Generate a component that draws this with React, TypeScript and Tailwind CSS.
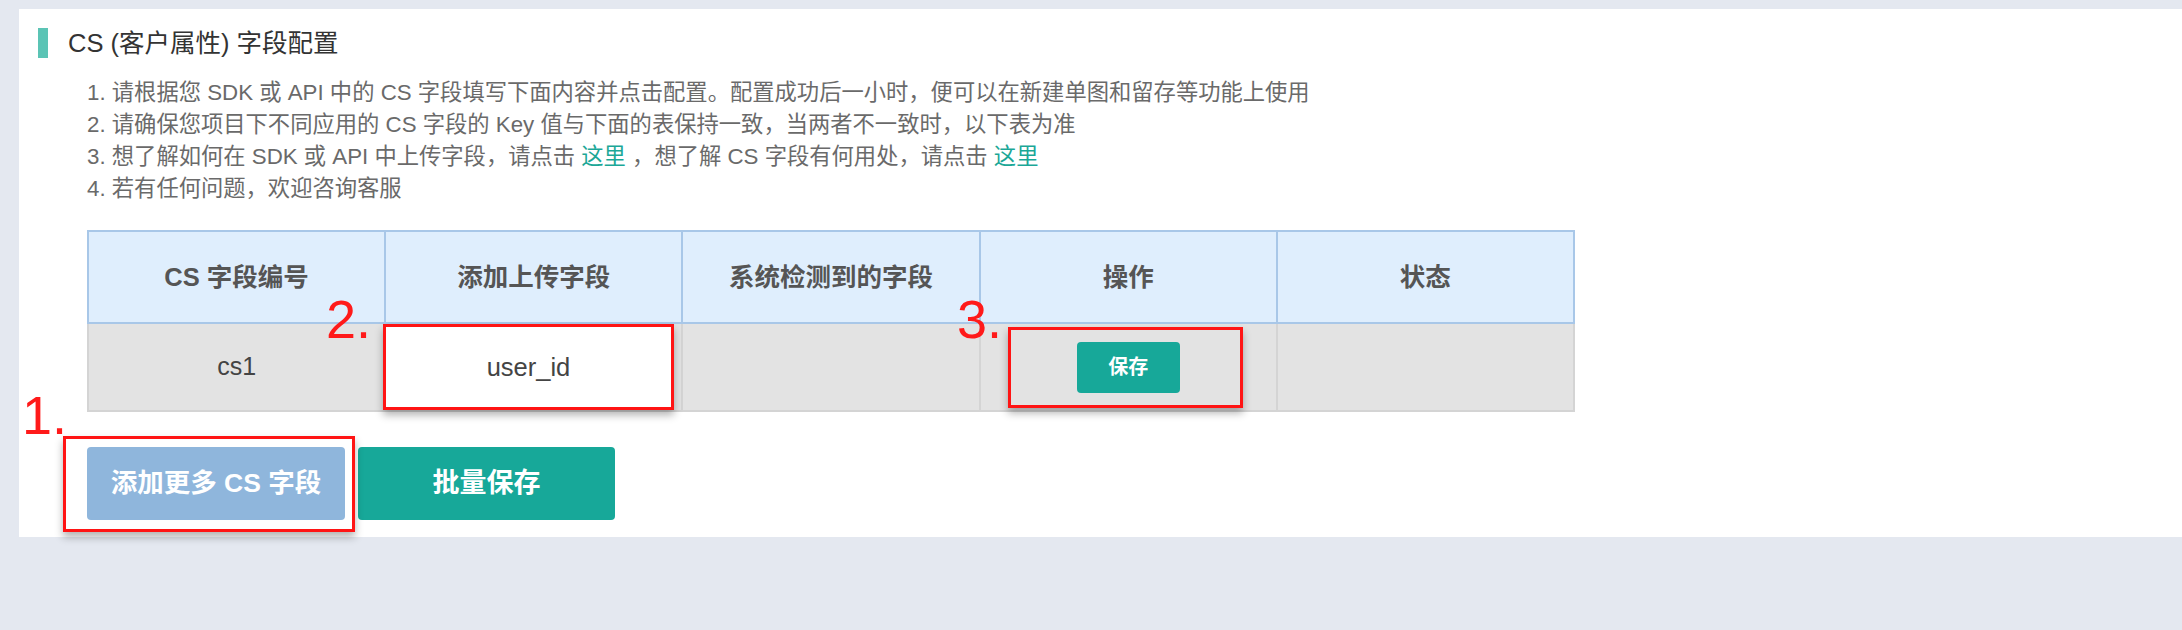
import React from "react";

const FONT = { fontFamily: '"Liberation Sans", "Noto Sans CJK SC", sans-serif' };

const TIPS: React.ReactNode[] = [
  "1. 请根据您 SDK 或 API 中的 CS 字段填写下面内容并点击配置。配置成功后一小时，便可以在新建单图和留存等功能上使用",
  "2. 请确保您项目下不同应用的 CS 字段的 Key 值与下面的表保持一致，当两者不一致时，以下表为准",
  <>
    3. 想了解如何在 SDK 或 API 中上传字段，请点击 <span className="text-[#1ba797]">这里</span> ，想了解 CS 字段有何用处，请点击{" "}
    <span className="text-[#1ba797]">这里</span>
  </>,
  "4. 若有任何问题，欢迎咨询客服",
];

const HEADERS = ["CS 字段编号", "添加上传字段", "系统检测到的字段", "操作", "状态"];

function Mark({ n, className }: { n: string; className: string }) {
  return (
    <div className={`absolute text-[54px] leading-none font-light text-[#ff1a1a] ${className}`}>
      {n}
    </div>
  );
}

export default function App() {
  return (
    <div className="h-[630px] w-full bg-[#e4e8f0] pt-[9px] pl-[19px]" style={FONT}>
      <div className="relative h-[528px] bg-white">
        <div className="flex items-center pt-[19px] pl-[19px]">
          <div className="h-[30px] w-[10px] bg-[#5bc4b5]" />
          <span className="ml-[20px] text-[25.5px] leading-[30px] text-[#333]">CS (客户属性) 字段配置</span>
        </div>

        <div className="mt-[19px] pl-[68px] text-[22.3px] leading-[32px] text-[#6a6a6a]">
          {TIPS.map((t, i) => (
            <div key={i}>{t}</div>
          ))}
        </div>

        <table className="ml-[68px] mt-[25px] w-[1488px] table-fixed border-collapse">
          <thead>
            <tr className="h-[92px] bg-[#dfeefd]">
              {HEADERS.map((h) => (
                <th key={h} className="border-2 border-[#a8c7e8] text-[25.5px] font-bold text-[#555]">
                  {h}
                </th>
              ))}
            </tr>
          </thead>
          <tbody>
            <tr className="h-[88px] bg-[#e3e3e3] text-[25px] text-[#444]">
              <td className="border-2 border-[#d4d4d4] text-center">cs1</td>
              <td className="border-2 border-[#d4d4d4]" />
              <td className="border-2 border-[#d4d4d4]" />
              <td className="border-2 border-[#d4d4d4] text-center">
                <button className="h-[51px] w-[103px] rounded-[4px] bg-[#17a899] text-[20px] font-bold text-white">
                  保存
                </button>
              </td>
              <td className="border-2 border-[#d4d4d4]" />
            </tr>
          </tbody>
        </table>

        <div className="mt-[35px] flex gap-[13px] pl-[68px]">
          <button className="h-[73px] w-[258px] rounded-[4px] bg-[#8fb6dc] text-[26.5px] font-bold text-white">
            添加更多 CS 字段
          </button>
          <button className="h-[73px] w-[257px] rounded-[4px] bg-[#17a899] text-[27px] font-bold text-white">
            批量保存
          </button>
        </div>

        {/* annotations */}
        <div className="absolute left-[364px] top-[315px] flex h-[86px] w-[291px] items-center justify-center border-[3px] border-[#ff1414] bg-white text-[25.5px] text-[#444] shadow-[0_5px_8px_rgba(0,0,0,0.3)]">
          user_id
        </div>
        <div className="absolute left-[989px] top-[318px] h-[81px] w-[235px] border-[3px] border-[#ff1414] shadow-[0_5px_8px_rgba(0,0,0,0.3)]" />
        <div className="absolute left-[44px] top-[427px] h-[96px] w-[292px] border-[3px] border-[#ff1414] shadow-[0_5px_8px_rgba(0,0,0,0.3)]" />
        <Mark n="1." className="left-[3px] top-[379px]" />
        <Mark n="2." className="left-[307px] top-[283px]" />
        <Mark n="3." className="left-[938px] top-[283px]" />
      </div>
    </div>
  );
}
